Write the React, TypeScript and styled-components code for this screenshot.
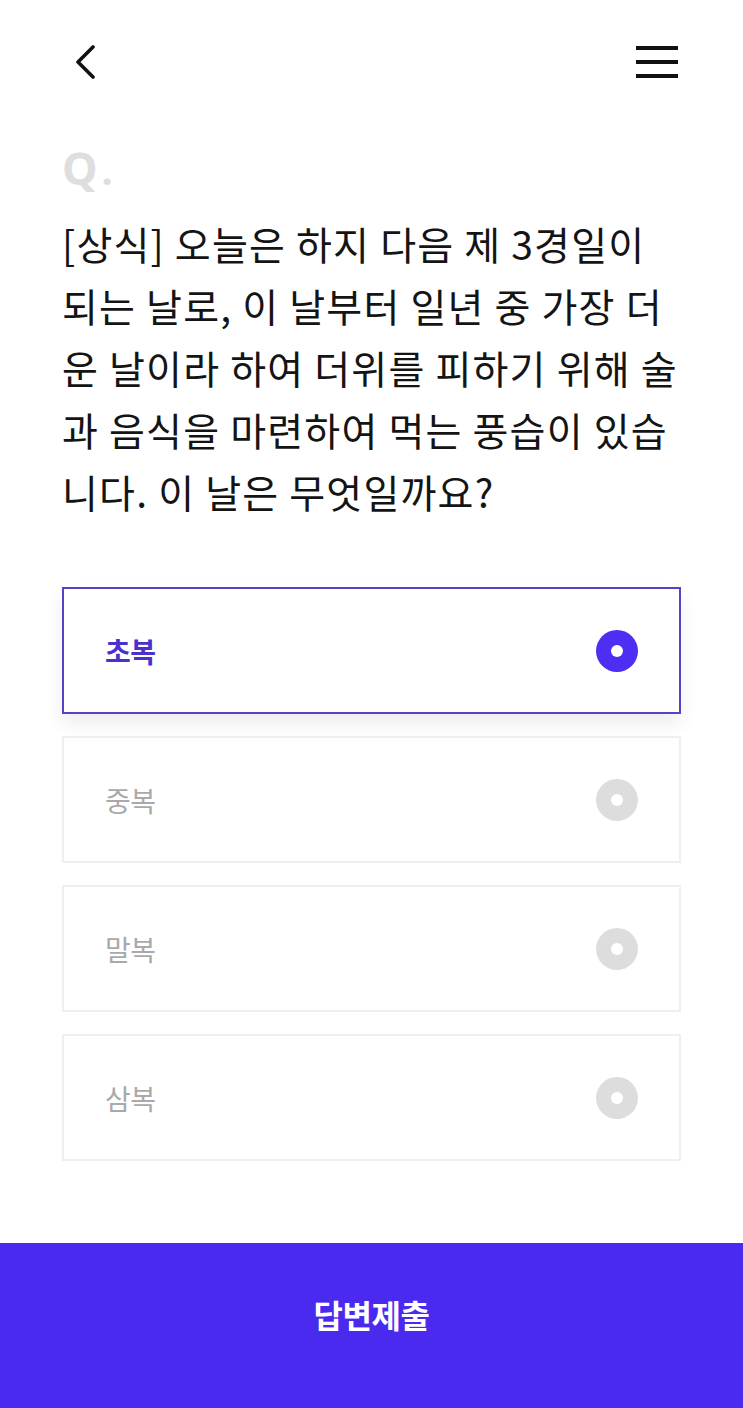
import React, { useState } from "react";
import styled, { createGlobalStyle } from "styled-components";

const GlobalStyle = createGlobalStyle`
  * {
    box-sizing: border-box;
  }
  body {
    margin: 0;
    background: #fff;
    font-family: "Noto Sans CJK KR", "Noto Sans", sans-serif;
    color: #111;
  }
`;

const Page = styled.div`
  display: flex;
  flex-direction: column;
  min-height: 100vh;
`;

const Header = styled.header`
  display: flex;
  align-items: center;
  justify-content: space-between;
  height: 124px;
  padding: 0 65px 0 73px;
`;

const IconButton = styled.button`
  display: flex;
  align-items: center;
  justify-content: center;
  padding: 0;
  border: 0;
  background: none;
  cursor: pointer;
`;

const Content = styled.main`
  padding: 22px 62px 0;
`;

const QMark = styled.div`
  font-family: "Noto Sans", "Liberation Sans", sans-serif;
  font-size: 45px;
  line-height: 44px;
  font-weight: 700;
  color: #dedede;

  span {
    margin-left: 4px;
    font-size: 40px;
    line-height: 0;
  }
`;

const Question = styled.p`
  margin: 22px 0 0;
  font-size: 39px;
  line-height: 62px;
  font-weight: 400;
  color: #141414;
  letter-spacing: 1.2px;
  white-space: nowrap;
`;

const Options = styled.div`
  display: flex;
  flex-direction: column;
  gap: 22px;
  margin-top: 65px;
`;

const Option = styled.button<{ $selected: boolean }>`
  display: flex;
  align-items: center;
  justify-content: space-between;
  height: 127px;
  padding: 0 41px;
  border: 2px solid ${p => (p.$selected ? "#5a40c6" : "#efefef")};
  background: #fff;
  box-shadow: ${p => (p.$selected ? "0 10px 18px rgba(0, 0, 0, 0.07)" : "none")};
  font-family: inherit;
  cursor: pointer;
  text-align: left;
`;

const OptionLabel = styled.span<{ $selected: boolean }>`
  font-size: 28px;
  font-weight: ${p => (p.$selected ? 700 : 400)};
  color: ${p => (p.$selected ? "#4a30cc" : "#a9a9a9")};
  letter-spacing: -0.5px;
`;

const Radio = styled.span<{ $selected: boolean }>`
  display: flex;
  align-items: center;
  justify-content: center;
  width: 42px;
  height: 42px;
  border-radius: 50%;
  background: ${p => (p.$selected ? "#4d2ef2" : "#dddddd")};

  &::after {
    content: "";
    width: 12px;
    height: 12px;
    border-radius: 50%;
    background: #fff;
  }
`;

const Submit = styled.button`
  margin-top: auto;
  height: 165px;
  padding: 0 0 24px;
  border: 0;
  background: #4b2af0;
  color: #fff;
  font-family: inherit;
  font-size: 32px;
  font-weight: 700;
  letter-spacing: -0.5px;
  cursor: pointer;
`;

const lines = [
  "[상식] 오늘은 하지 다음 제 3경일이",
  "되는 날로, 이 날부터 일년 중 가장 더",
  "운 날이라 하여 더위를 피하기 위해 술",
  "과 음식을 마련하여 먹는 풍습이 있습",
  "니다. 이 날은 무엇일까요?",
];

const choices = ["초복", "중복", "말복", "삼복"];

const App: React.FC = () => {
  const [picked, setPicked] = useState(0);

  return (
    <Page>
      <GlobalStyle />
      <Header>
        <IconButton aria-label="뒤로">
          <svg width="24" height="34" viewBox="0 0 24 34" fill="none">
            <path d="M20 2 L5 17 L20 32" stroke="#111" strokeWidth="3.6" strokeLinecap="round" strokeLinejoin="round" />
          </svg>
        </IconButton>
        <IconButton aria-label="메뉴">
          <svg width="42" height="34" viewBox="0 0 42 34" fill="none">
            <path d="M0 3 H42 M0 17 H42 M0 31 H42" stroke="#111" strokeWidth="3.8" />
          </svg>
        </IconButton>
      </Header>
      <Content>
        <QMark>
          Q<span>.</span>
        </QMark>
        <Question>
          {lines.map((l, i) => (
            <React.Fragment key={i}>
              {l}
              {i < lines.length - 1 && <br />}
            </React.Fragment>
          ))}
        </Question>
        <Options>
          {choices.map((c, i) => (
            <Option key={c} $selected={picked === i} onClick={() => setPicked(i)}>
              <OptionLabel $selected={picked === i}>{c}</OptionLabel>
              <Radio $selected={picked === i} />
            </Option>
          ))}
        </Options>
      </Content>
      <Submit>답변제출</Submit>
    </Page>
  );
};

export default App;
